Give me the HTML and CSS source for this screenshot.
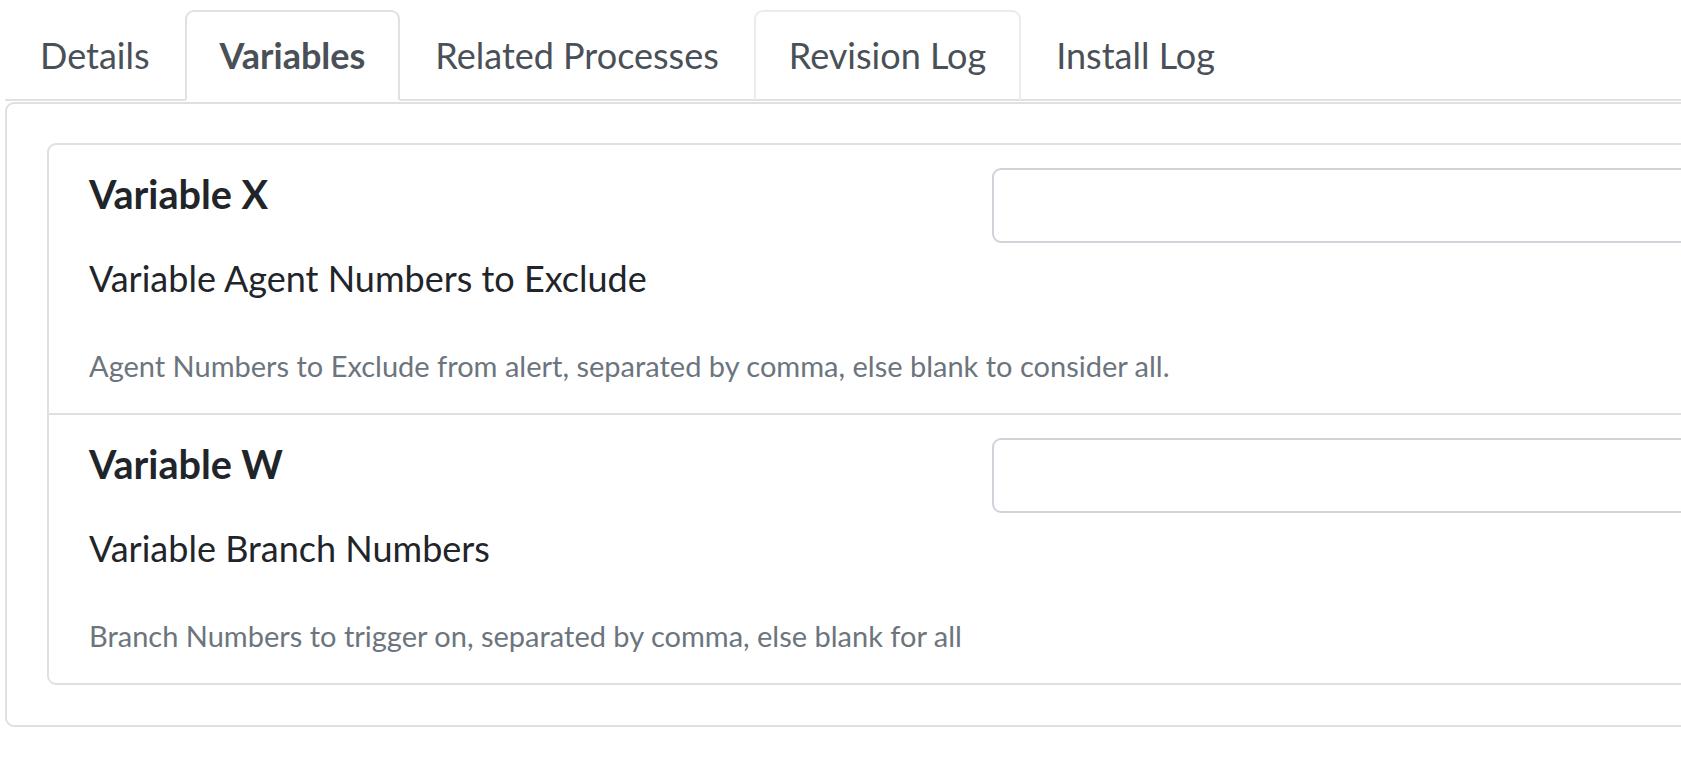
FILE: index.html
```html
<!DOCTYPE html>
<html lang="en">
<head>
<meta charset="utf-8">
<title>Variables</title>
<link rel="stylesheet" href="styles.css">
</head>
<body>
<div class="page">
  <ul class="tabs">
    <li class="tab-item"><a class="tab">Details</a></li>
    <li class="tab-item"><a class="tab tab-active">Variables</a></li>
    <li class="tab-item"><a class="tab">Related Processes</a></li>
    <li class="tab-item"><a class="tab tab-hover">Revision Log</a></li>
    <li class="tab-item"><a class="tab">Install Log</a></li>
  </ul>
  <div class="panel">
    <div class="card">
      <div class="var-row">
        <div class="var-text">
          <h5 class="var-title">Variable X</h5>
          <p class="var-label">Variable Agent Numbers to Exclude</p>
          <small class="var-help">Agent Numbers to Exclude from alert, separated by comma, else blank to consider all.</small>
        </div>
        <div class="var-input"><input class="field" type="text"></div>
      </div>
      <div class="var-row var-row-next">
        <div class="var-text">
          <h5 class="var-title">Variable W</h5>
          <p class="var-label">Variable Branch Numbers</p>
          <small class="var-help">Branch Numbers to trigger on, separated by comma, else blank for all</small>
        </div>
        <div class="var-input"><input class="field" type="text"></div>
      </div>
    </div>
  </div>
</div>
</body>
</html>
```
FILE: styles.css
```css
html, body {
  margin: 0;
  padding: 0;
  overflow: hidden;
  background: #fff;
}
body {
  font-family: Lato, "Open Sans", sans-serif;
  color: #212529;
}
.page {
  width: 2200px;
  padding: 10px 0 0 5px;
}
.tabs {
  display: flex;
  list-style: none;
  margin: 0;
  padding: 0;
  border-bottom: 2px solid #dee2e6;
}
.tab-item {
  margin-bottom: -2px;
}
.tab {
  display: block;
  padding: 16px 33px 17px;
  border: 2px solid transparent;
  border-radius: 9px 9px 0 0;
  font-size: 36px;
  line-height: 54px;
  color: #495057;
  cursor: pointer;
}
.tab-first {
  padding-left: 31px;
  padding-right: 31px;
}
.tab-active {
  font-weight: 700;
  background: #fff;
  border-color: #dee2e6 #dee2e6 #fff;
}
.tab-hover {
  border-color: #e9ecef #e9ecef #dee2e6;
}
.panel {
  margin-top: 1px;
  border: 2px solid #e0e0e0;
  border-radius: 9px;
  padding: 39px 40px 40px;
}
.card {
  border: 2px solid #e0e0e0;
  border-radius: 9px;
}
.var-row {
  display: flex;
  padding: 23px 0 0 40px;
  height: 268px;
  box-sizing: border-box;
}
.var-row-next {
  border-top: 2px solid #e0e0e0;
  height: 270px;
}
.var-text {
  flex: none;
  width: 903px;
  display: flex;
  flex-direction: column;
  align-items: flex-start;
}
.var-title {
  margin: 2px 0 0;
  font-size: 39.6px;
  line-height: 47.5px;
  font-weight: 700;
  color: #212529;
}
.var-label {
  margin: 33.5px 0 0;
  font-size: 36px;
  line-height: 54px;
  color: #212529;
  white-space: nowrap;
}
.var-help {
  margin-top: 39px;
  font-size: 29px;
  line-height: 43.5px;
  color: #6c757d;
  white-space: nowrap;
}
.var-input {
  flex: none;
  width: 1000px;
}
.field {
  display: block;
  box-sizing: border-box;
  width: 100%;
  height: 75px;
  margin: 0;
  padding: 8px 27px;
  border: 2px solid #ced4da;
  border-radius: 9px;
  background: #fff;
  font-family: Lato, sans-serif;
  font-size: 36px;
  color: #495057;
  outline: none;
}
```
